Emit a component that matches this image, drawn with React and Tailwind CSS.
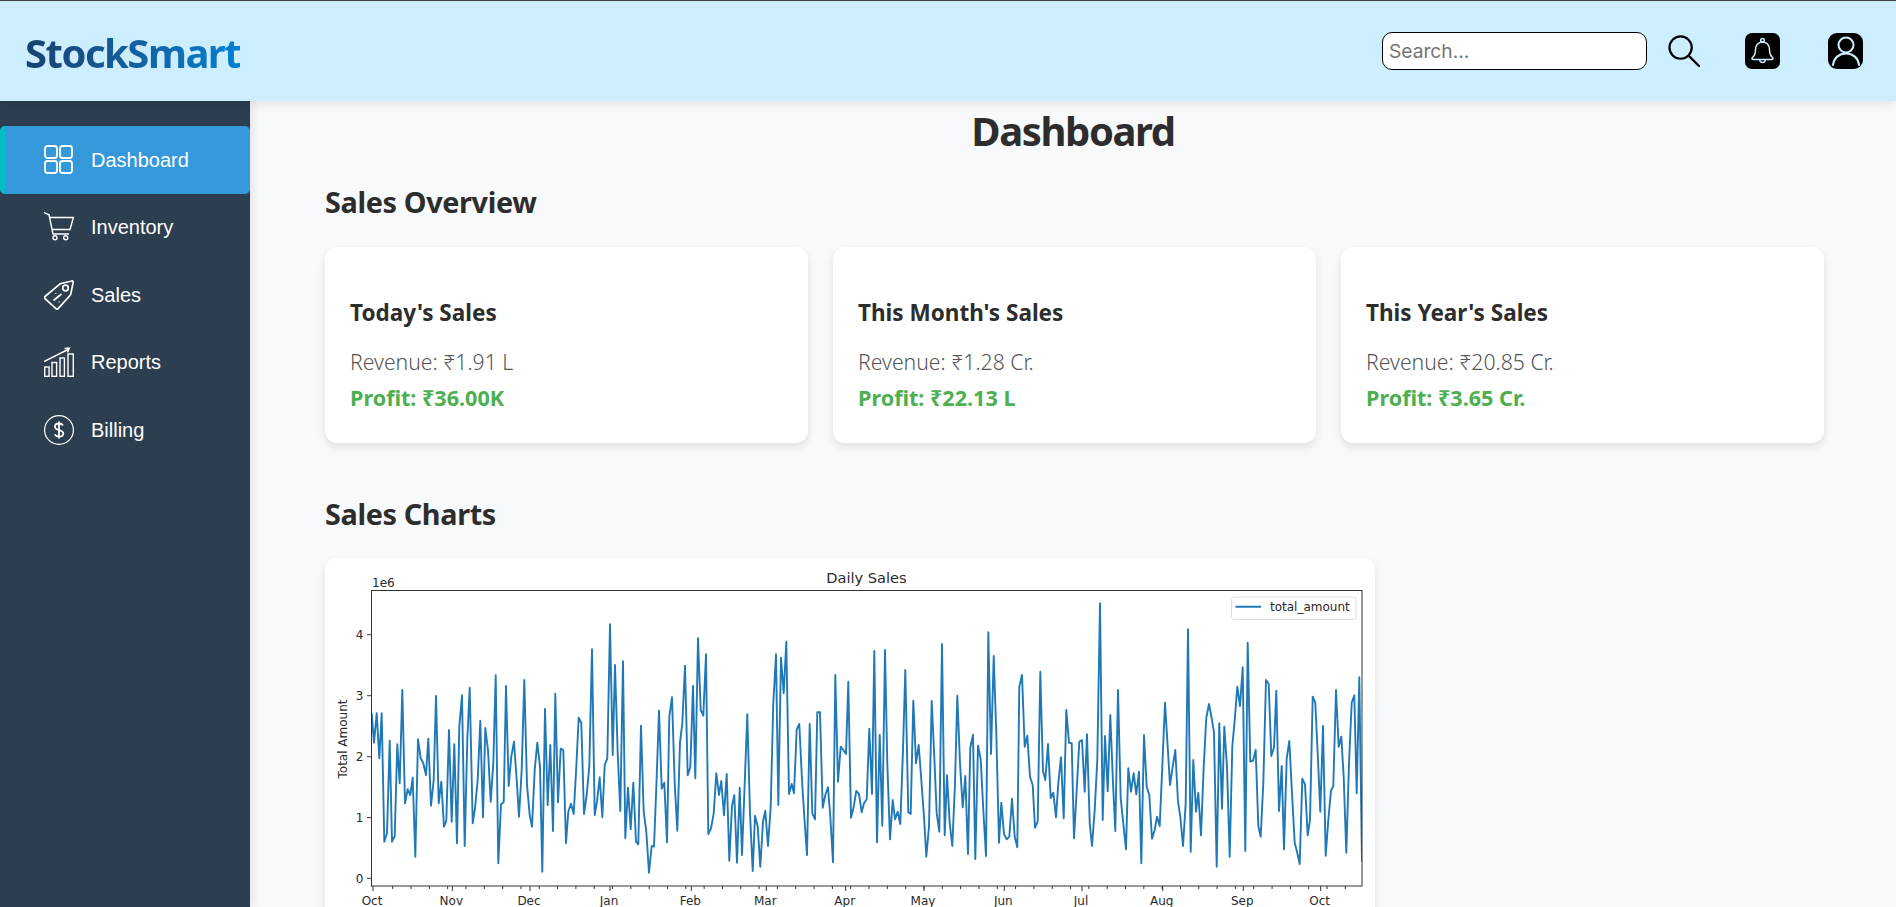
const SEGOE = 'font-["Noto_Sans","Open_Sans",sans-serif]'

const CROP_A = [[155,490],[162,578],[170,490],[178,625],[185,490],[193,875],[201,850],[209,572],[216,875],[224,858],[232,583],[239,700],[247,420],[255,760],[263,718],[271,735],[278,683],[286,920],[294,568],[302,625],[310,640],[318,675],[325,566],[333,767],[341,690],[348,438],[356,760],[364,695],[372,830],[379,812],[387,540],[395,815],[403,583],[411,880],[418,530],[426,436],[434,888],[442,570],[449,413],[458,820],[465,775],[473,690],[481,512],[489,802],[496,534],[504,600],[512,755],[520,640],[527,376],[535,940],[543,763],[551,757],[558,408],[566,708],[574,620],[582,575],[590,690],[597,800],[605,660],[613,390],[621,705],[629,795],[636,830],[644,660],[652,578],[660,650],[667,965],[675,477],[683,765],[691,585],[699,843],[706,431],[714,757],[722,596],[730,600],[738,880],[745,785],[753,761],[761,792],[769,650],[776,503],[784,518],[792,792],[800,735],[808,650],[816,298],[824,795],[831,755],[839,682],[847,802],[854,645],[862,625],[870,223],[878,615],[885,345],[893,610],[901,783],[909,334],[916,865],[924,713],[932,838],[940,698],[948,875],[955,883],[963,527],[971,785],[979,845],[987,968],[995,888],[1002,890],[1010,680],[1017,482],[1025,716],[1033,698],[1041,877]]
const CROP_B = [[-2,500],[6,442],[14,700],[22,842],[30,578],[37,520],[45,347],[53,676],[61,652],[69,408],[76,685],[84,265],[92,480],[100,497],[108,313],[115,852],[123,835],[131,790],[139,670],[147,735],[154,693],[162,796],[170,672],[178,932],[186,767],[193,736],[201,938],[209,713],[216,915],[224,700],[232,493],[240,790],[248,963],[255,797],[263,830],[271,950],[279,815],[286,782],[294,888],[302,770],[310,460],[318,313],[325,765],[333,323],[341,430],[349,275],[357,732],[365,702],[372,730],[380,538],[388,522],[396,690],[403,800],[411,915],[419,522],[427,790],[435,808],[442,487],[450,487],[458,773],[466,735],[474,712],[481,800],[489,937],[496,375],[504,695],[512,590],[520,600],[528,612],[535,395],[543,803],[551,770],[559,723],[567,732],[575,787],[582,760],[590,748],[598,536],[606,732],[613,303],[621,877],[629,555],[637,827],[645,300],[652,640],[660,868],[668,750],[675,808],[683,785],[691,822],[699,600],[706,360],[715,787],[722,792],[730,452],[738,640],[746,585],[754,690],[762,800],[769,920],[777,830],[785,453],[793,620],[800,790],[808,845],[816,282],[824,856],[831,676],[839,820],[847,888],[855,700],[862,437],[870,640],[878,772],[886,678],[894,912],[901,593],[909,554],[916,927],[924,587],[932,628],[940,780],[948,918],[955,247],[963,612],[971,318],[979,550],[987,878],[994,758],[1002,852],[1010,868],[1018,860],[1026,746],[1034,860],[1042,892]]
const CROP_C = [[-2,410],[6,375],[14,590],[22,557],[30,680],[38,705],[45,833],[53,815],[61,365],[69,663],[76,690],[84,582],[92,744],[100,728],[108,802],[115,700],[123,622],[131,805],[139,480],[147,578],[155,580],[162,865],[170,720],[178,575],[186,570],[194,725],[201,553],[209,820],[216,888],[224,780],[232,630],[240,160],[248,810],[255,558],[263,724],[271,495],[279,700],[286,843],[294,420],[302,745],[310,820],[318,898],[325,655],[333,725],[341,670],[349,733],[357,665],[364,940],[372,555],[380,710],[388,735],[396,866],[404,840],[411,800],[419,828],[427,650],[435,458],[443,590],[450,705],[458,650],[466,600],[474,755],[481,800],[489,888],[497,760],[504,238],[512,905],[520,630],[528,785],[535,728],[543,856],[551,650],[559,503],[567,462],[575,505],[582,548],[590,950],[598,520],[606,776],[613,530],[621,650],[629,920],[637,590],[645,500],[652,410],[660,468],[668,352],[676,903],[683,278],[691,635],[699,632],[707,600],[715,828],[722,860],[730,700],[738,390],[746,402],[754,618],[762,592],[769,422],[777,783],[785,648],[792,898],[800,625],[808,573],[816,730],[824,878],[831,905],[839,942],[847,686],[855,703],[863,856],[870,810],[878,440],[886,458],[894,630],[901,785],[909,528],[917,917],[925,810],[933,722],[940,708],[948,420],[956,590],[964,560],[971,680],[979,908],[987,640],[995,458],[1003,436],[1010,730],[1018,382],[1026,935]]

// points were read off 3x crops, so put them back in page coordinates
const toPage = (crop, left) => crop.map(([x, y]) => `${(left + x / 3).toFixed(1)},${(550 + y / 3).toFixed(1)}`)
const LINE = [...toPage(CROP_A, 320), ...toPage(CROP_B, 670), ...toPage(CROP_C, 1020)].join(' ')

const MONTHS = [['Oct',373],['Nov',452.3],['Dec',530],['Jan',610],['Feb',691.3],['Mar',766.3],['Apr',845.7],['May',924],['Jun',1004.3],['Jul',1082],['Aug',1162.7],['Sep',1243.3],['Oct',1320.7]]
const WEEKS = Array.from({ length: 54 }, (_, i) => 392.7 + i * 18.32).filter((x) => x <= 1362)
const Y_TICKS = [[0,878.3],[1,817.7],[2,756.7],[3,695.7],[4,634.7]]

function DailySalesChart() {
  return (
    <svg viewBox="325 558 1050 520" className="block h-[520px] w-[1050px]" fontFamily="DejaVu Sans, sans-serif" fill="#2a2a2a">
      <defs>
        <clipPath id="plot"><rect x="372" y="591" width="990" height="295" /></clipPath>
      </defs>
      <text x="866.5" y="583" fontSize="14.6" textAnchor="middle">Daily Sales</text>
      <text x="372" y="587" fontSize="12">1e6</text>
      <polyline points={LINE} fill="none" stroke="#2079b6" strokeWidth="1.9" strokeLinejoin="round" clipPath="url(#plot)" />
      <rect x="371.5" y="590.5" width="990.5" height="295.5" fill="none" stroke="#333" strokeWidth="1" />
      {Y_TICKS.map(([label, y]) => (
        <g key={label}>
          <line x1="367" x2="371.5" y1={y} y2={y} stroke="#333" />
          <text x="363.5" y={y + 4.5} fontSize="12" textAnchor="end">{label}</text>
        </g>
      ))}
      {WEEKS.map((x) => (
        <line key={x} x1={x} x2={x} y1="886" y2="889" stroke="#333" />
      ))}
      {MONTHS.map(([label, x]) => (
        <g key={x}>
          <line x1={x} x2={x} y1="886" y2="891" stroke="#333" />
          <text x={x - 1} y="904.5" fontSize="12" textAnchor="middle">{label}</text>
        </g>
      ))}
      <text transform="translate(346.5 739) rotate(-90)" fontSize="12" textAnchor="middle">Total Amount</text>
      <rect x="1231.5" y="597" width="124.5" height="22.5" rx="2.5" fill="#fff" stroke="#ddd" />
      <line x1="1235.5" x2="1261" y1="606.8" y2="606.8" stroke="#2079b6" strokeWidth="1.9" />
      <text x="1270" y="611" fontSize="12">total_amount</text>
    </svg>
  )
}

function GridIcon() {
  return (
    <svg width="30" height="30" viewBox="0 0 30 30" fill="none" stroke="#fff" strokeWidth="1.8">
      <rect x="1" y="1" width="12" height="12" rx="2.5" />
      <rect x="16" y="1" width="12" height="12" rx="2.5" />
      <rect x="1" y="16" width="12" height="12" rx="2.5" />
      <rect x="16" y="16" width="12" height="12" rx="2.5" />
    </svg>
  )
}

function CartIcon() {
  return (
    <svg width="30" height="30" viewBox="0 0 30 30" fill="none" stroke="#fff" strokeWidth="1.4">
      <path d="M0 .5 5 2.8 9 22h16" />
      <path d="M5.4 5.5h24l-3.4 12H8" />
      <circle cx="11" cy="25.8" r="2" />
      <circle cx="21.7" cy="25.8" r="2" />
    </svg>
  )
}

function TagIcon() {
  return (
    <svg width="30" height="30" viewBox="0 0 30 30" fill="none" stroke="#fff" strokeWidth="1.7" strokeLinejoin="round">
      <path d="M28 1 17 3.5a3 3 0 0 0-1.5.8L1 16.5a1.5 1.5 0 0 0 0 2.2l11 10a1.5 1.5 0 0 0 2.1-.1L26 15.5a3 3 0 0 0 .8-1.6L29.2 2.2A1 1 0 0 0 28 1Z" />
      <circle cx="21.5" cy="8" r="2.8" />
      <path d="M9.5 20.5l8-6.5M11.7 13.2v.8M15 21.5v.8" />
    </svg>
  )
}

function ReportsIcon() {
  return (
    <svg width="30" height="30" viewBox="0 0 30 30" fill="none" stroke="#fff" strokeWidth="1.4">
      <rect x=".7" y="20" width="4.4" height="9.3" />
      <rect x="8" y="15.5" width="4.6" height="13.8" />
      <rect x="16" y="11" width="4.4" height="18.3" />
      <rect x="24" y="7" width="5.3" height="22.3" />
      <path d="M0 14.5 25 2M20.5 1.5l5-.5-2 4.5" />
    </svg>
  )
}

function BillingIcon() {
  return (
    <svg width="30" height="30" viewBox="0 0 30 30" fill="none" stroke="#fff">
      <circle cx="15" cy="15" r="14.4" strokeWidth="1.2" />
      <path d="M19 10.5c-.8-1.4-2.2-2-4-2-2.4 0-4 1.2-4 3.2 0 4.5 8.3 2.3 8.3 6.7 0 2-1.800 3.2-4.300 3.2-2 0-3.500-.8-4.300-2.200M15 6.500v17" strokeWidth="1.8" />
    </svg>
  )
}

const NAV_ITEMS = [
  { label: 'Dashboard', icon: GridIcon, active: true },
  { label: 'Inventory', icon: CartIcon },
  { label: 'Sales', icon: TagIcon },
  { label: 'Reports', icon: ReportsIcon },
  { label: 'Billing', icon: BillingIcon }
]

const SUMMARY = [
  { title: "Today's Sales", revenue: '₹1.91 L', profit: '₹36.00K' },
  { title: "This Month's Sales", revenue: '₹1.28 Cr.', profit: '₹22.13 L' },
  { title: "This Year's Sales", revenue: '₹20.85 Cr.', profit: '₹3.65 Cr.' }
]

function Header() {
  return (
    <header className="relative z-20 flex h-[101px] shrink-0 items-center justify-between border-t border-[#444] bg-[#cceeff] pl-[25px] pr-[33px] shadow-[0_2px_10px_rgba(0,0,0,0.1)]">
      <h1 className={`${SEGOE} mt-[3px] bg-gradient-to-r from-[#17416f] to-[#0080d2] bg-clip-text text-[40px] font-bold leading-none tracking-[-1.5px] text-transparent`}>
        StockSmart
      </h1>
      <div className="flex items-center">
        <input
          type="text"
          placeholder="Search..."
          className="h-[38px] w-[265px] rounded-[10px] border border-black bg-white px-[6px] font-['Inter',sans-serif] text-[19.2px] outline-none placeholder:text-[#757575]"
        />
        <svg className="ml-[21px]" width="32" height="32" viewBox="0 0 33 33" fill="none" stroke="#000" strokeWidth="2.3">
          <circle cx="13" cy="13" r="11.5" />
          <path d="M21.5 21.5 32 32" strokeLinecap="round" />
        </svg>
        <div className="ml-[45px] flex h-[36px] w-[35px] items-center justify-center rounded-[7px] bg-black">
          <svg width="25" height="28" viewBox="0 0 25 28" fill="none" stroke="#cceeff" strokeWidth="1.5" strokeLinejoin="round">
            <path d="M12.5 5c-4.5 0-7 3.5-7 7.5 0 5-1.2 6.5-3 8-1 .9-.4 2 .8 2h18.4c1.2 0 1.8-1.1.8-2-1.8-1.500-3-3-3-8 0-4-2.500-7.500-7-7.500Z" />
            <circle cx="12.5" cy="3.2" r="1.8" />
            <path d="M9.5 22.5c.3 2 1.5 3 3 3s2.7-1 3-3" />
          </svg>
        </div>
        <div className="ml-[48px] flex h-[36px] w-[35px] items-center justify-center rounded-[9px] bg-black">
          <svg width="30" height="32" viewBox="0 0 30 32" fill="none" stroke="#cceeff" strokeWidth="2">
            <circle cx="15" cy="10" r="7.5" />
            <path d="M2 30c.8-7 6-11.5 13-11.5S27.2 23 28 30" strokeLinecap="round" />
          </svg>
        </div>
      </div>
    </header>
  )
}

function Sidebar() {
  return (
    <nav className="relative z-10 w-[250px] shrink-0 bg-[#2c3e50] pt-[25px] font-['Liberation_Sans',sans-serif] text-[20px] text-white shadow-[2px_0_10px_rgba(0,0,0,0.1)]">
      {NAV_ITEMS.map(({ label, icon: Icon, active }) => (
        <a
          key={label}
          className={`flex h-[67.5px] items-center gap-[17px] rounded-[5px] border-l-[5px] pl-[39px] ${
            active ? 'border-[#00bfc8] bg-[#3498db]' : 'border-transparent'
          }`}
        >
          <Icon />
          <span className="-translate-y-[0.5px]">{label}</span>
        </a>
      ))}
    </nav>
  )
}

function SummaryCard({ title, revenue, profit }) {
  return (
    <div className="h-[196px] rounded-[12px] bg-white px-[25px] pt-[46px] shadow-[0_4px_8px_rgba(0,0,0,0.1)]">
      <h3 className="text-[22.5px] font-bold leading-[40px] text-[#2d2d2d]">{title}</h3>
      <p className="mt-[13px] text-[21.2px] font-light leading-[32px] text-[#555]">Revenue: {revenue}</p>
      <p className="mt-[4px] text-[21.6px] font-bold leading-[32px] text-[#4caf50]">Profit: {profit}</p>
    </div>
  )
}

export default function App() {
  return (
    <div className="flex h-screen flex-col overflow-hidden">
      <Header />
      <div className="flex min-h-0 flex-1">
        <Sidebar />
        <main className={`${SEGOE} min-w-0 flex-1 overflow-hidden bg-[#f8f9fa] pl-[75px]`}>
          <h1 className="-ml-[75px] pt-[3px] text-center text-[40px] font-bold leading-[54px] tracking-[-1.4px] text-[#2d2d2d]">Dashboard</h1>
          <h2 className="mt-[24px] text-[28.8px] font-bold leading-[40px] tracking-[-0.35px] text-[#2d2d2d]">Sales Overview</h2>
          <div className="mt-[25px] grid w-[1499px] grid-cols-3 gap-[25px]">
            {SUMMARY.map((item) => (
              <SummaryCard key={item.title} {...item} />
            ))}
          </div>
          <h2 className="mt-[51px] text-[28.8px] font-bold leading-[40px] tracking-[-0.35px] text-[#2d2d2d]">Sales Charts</h2>
          <div className="mt-[24px] w-[1050px] overflow-hidden rounded-[12px] bg-white shadow-[0_4px_8px_rgba(0,0,0,0.1)]">
            <DailySalesChart />
          </div>
        </main>
      </div>
    </div>
  )
}
